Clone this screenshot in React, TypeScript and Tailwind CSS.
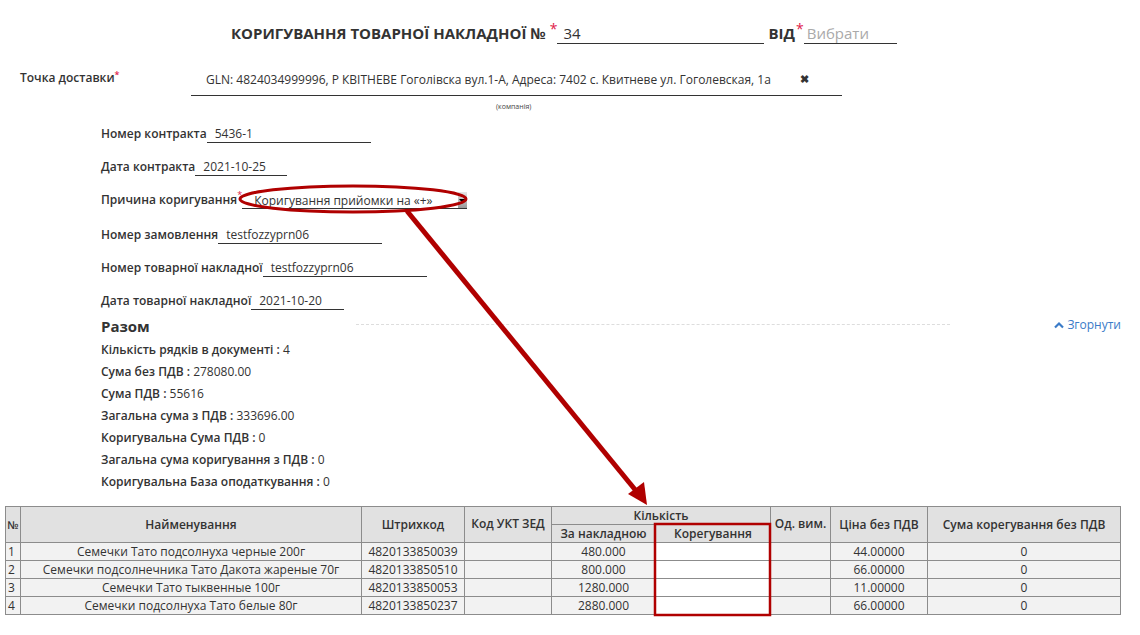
const fields = [
  { label: 'Номер контракта', value: '5436-1', w: 'w-[164px]' },
  { label: 'Дата контракта', value: '2021-10-25', w: 'w-[92px]' },
];

const fields2 = [
  { label: 'Номер замовлення', value: 'testfozzyprn06', w: 'w-[164px]' },
  { label: 'Номер товарної накладної', value: 'testfozzyprn06', w: 'w-[164px]' },
  { label: 'Дата товарної накладної', value: '2021-10-20', w: 'w-[93px]' },
];

const totals = [
  ['Кількість рядків в документі', '4'],
  ['Сума без ПДВ', '278080.00'],
  ['Сума ПДВ', '55616'],
  ['Загальна сума з ПДВ', '333696.00'],
  ['Коригувальна Сума ПДВ', '0'],
  ['Загальна сума коригування з ПДВ', '0'],
  ['Коригувальна База оподаткування', '0'],
];

const rows = [
  { n: 1, name: 'Семечки Тато подсолнуха черные 200г', code: '4820133850039', qty: '480.000', price: '44.00000' },
  { n: 2, name: 'Семечки подсолнечника Тато Дакота жареные 70г', code: '4820133850510', qty: '800.000', price: '66.00000' },
  { n: 3, name: 'Семечки Тато тыквенные 100г', code: '4820133850053', qty: '1280.000', price: '11.00000' },
  { n: 4, name: 'Семечки подсолнуха Тато белые 80г', code: '4820133850237', qty: '2880.000', price: '66.00000' },
];

const th = 'border border-[#8c8c8c] font-semibold p-0 h-[18px] leading-[16px] whitespace-nowrap overflow-hidden';
const td = 'border border-[#8c8c8c] p-0 h-[18px] leading-[16px] whitespace-nowrap overflow-hidden';

function Field({ label, value, w }: { label: string; value: string; w: string }) {
  return (
    <div className="flex items-end h-[33px]">
      <span className="font-semibold text-[12px] leading-[17px] mb-[1px]">{label}</span>
      <div className={`${w} border-b border-[#333] text-[12px] leading-[17px] pl-[8px]`}>{value}</div>
    </div>
  );
}

export default function App() {
  return (
    <div className="relative w-[1140px] h-[635px] bg-white text-[#333] overflow-hidden" style={{ fontFamily: "'Open Sans', sans-serif" }}>
      {/* title */}
      <div className="flex items-end pt-[22px] pl-[231px] h-[44px]">
        <span className="font-bold text-[15px] leading-[20px] mb-[1px]">КОРИГУВАННЯ ТОВАРНОЇ НАКЛАДНОЇ №</span>
        <span className="text-[#e0204a] text-[14px] leading-[14px] self-start ml-[4px]">*</span>
        <div className="w-[207px] border-b border-[#333] pl-[6px] text-[15px] leading-[20px]">34</div>
        <span className="font-bold text-[15px] leading-[20px] mb-[1px] ml-[4px]">ВІД</span>
        <span className="text-[#e0204a] text-[14px] leading-[14px] self-start ml-[1px]">*</span>
        <div className="w-[93px] border-b border-[#333] pl-[3px] text-[15px] leading-[20px] text-[#aaa]">Вибрати</div>
      </div>

      {/* delivery point */}
      <div className="flex items-start mt-[20px] pl-[20px]">
        <span className="font-semibold text-[12px] leading-[18px] mt-[5px] w-[171px]">
          Точка доставки<sup className="text-[#e0204a] text-[9px]">*</sup>
        </span>
        <div className="w-[651px] h-[32px] border-b border-[#333] flex items-center pl-[15px] text-[12px]">
          <span className="w-[594px] whitespace-nowrap">GLN: 4824034999996, Р КВІТНЕВЕ Гоголівска вул.1-А, Адреса: 7402 с. Квитневе ул. Гоголевская, 1а</span>
          <span className="text-[11px] font-bold">✖</span>
        </div>
      </div>
      <div className="pl-[496px] text-[7px] leading-[10px] mt-[6px] text-[#444]">(компанія)</div>

      {/* fields */}
      <div className="pl-[101px] mt-[-2px]">
        {fields.map((f) => (
          <Field key={f.label} {...f} />
        ))}
        <div className="flex items-end h-[33px]">
          <span className="font-semibold text-[12px] leading-[17px] mb-[1px]">Причина коригування</span>
          <span className="text-[#e0204a] text-[9px] self-start mt-[12px]">*</span>
          <div className="w-[225px] h-[17px] border-b border-[#333] flex items-center text-[12px] leading-[17px] pl-[12px]">
            <span className="flex-1">Коригування прийомки на «+»</span>
            <span className="w-[9px] h-[16px] bg-gradient-to-b from-[#e6e6e6] to-[#9a9a9a] flex items-center justify-center">
              <svg width="7" height="5" viewBox="0 0 7 5"><path d="M0 1 L7 1 L3.5 5 Z" fill="#000" /></svg>
            </span>
          </div>
        </div>
        <div className="h-[2px]" />
        {fields2.map((f) => (
          <Field key={f.label} {...f} />
        ))}

        <div className="flex items-center h-[26px] mt-[3px]">
          <span className="font-bold text-[15px] w-[255px]">Разом</span>
          <div className="w-[594px] border-t border-dashed border-[#ddd] mb-[4px]" />
          <div className="ml-auto mr-[19px] flex items-center gap-[3px] text-[12px] text-[#3a7bc8] mb-[2px]">
            <svg width="10" height="8" viewBox="0 0 10 8"><path d="M1 6.5 L5 2.5 L9 6.5" stroke="#3a7bc8" strokeWidth="2.2" fill="none" /></svg>
            Згорнути
          </div>
        </div>
        <div>
          {totals.map(([k, v]) => (
            <div key={k} className="h-[22px] text-[12px] leading-[22px]">
              <span className="font-semibold">{k} : </span>{v}
            </div>
          ))}
        </div>
      </div>

      {/* table */}
      <table className="absolute left-[5px] top-[506px] w-[1115px] table-fixed border-collapse text-[12px] text-center">
        <colgroup>
          <col className="w-[15px]" />
          <col className="w-[341px]" />
          <col className="w-[103px]" />
          <col className="w-[87px]" />
          <col className="w-[104px]" />
          <col className="w-[115px]" />
          <col className="w-[60px]" />
          <col className="w-[97px]" />
          <col className="w-[193px]" />
        </colgroup>
        <thead className="bg-[#e1e1e1]">
          <tr>
            <th rowSpan={2} className={`${th} text-[11px]`}>№</th>
            <th rowSpan={2} className={th}>Найменування</th>
            <th rowSpan={2} className={th}>Штрихкод</th>
            <th rowSpan={2} className={`${th} align-top pt-[9px]`}>Код УКТ ЗЕД</th>
            <th colSpan={2} className={th}>Кількість</th>
            <th rowSpan={2} className={`${th} align-top pt-[9px]`}>Од. вим.</th>
            <th rowSpan={2} className={th}>Ціна без ПДВ</th>
            <th rowSpan={2} className={th}>Сума корегування без ПДВ</th>
          </tr>
          <tr>
            <th className={th}>За накладною</th>
            <th className={th}>Корегування</th>
          </tr>
        </thead>
        <tbody className="bg-[#f2f2f2]">
          {rows.map((r) => (
            <tr key={r.n}>
              <td className={`${td} text-left pl-[2px]`}>{r.n}</td>
              <td className={td}>{r.name}</td>
              <td className={td}>{r.code}</td>
              <td className={td}></td>
              <td className={td}>{r.qty}</td>
              <td className={`${td} bg-white`}></td>
              <td className={td}></td>
              <td className={td}>{r.price}</td>
              <td className={td}>0</td>
            </tr>
          ))}
        </tbody>
      </table>

      {/* annotation overlay */}
      <svg className="absolute left-0 top-0 pointer-events-none" width="1140" height="635">
        <ellipse cx="353" cy="199" rx="113" ry="13" fill="none" stroke="#b00000" strokeWidth="3" />
        <line x1="407" y1="211" x2="637" y2="492" stroke="#b00000" strokeWidth="5" />
        <polygon points="647,505 628,494 644,482" fill="#b00000" />
        <rect x="655" y="524" width="115" height="91" fill="none" stroke="#b00000" strokeWidth="2.5" />
      </svg>
    </div>
  );
}
